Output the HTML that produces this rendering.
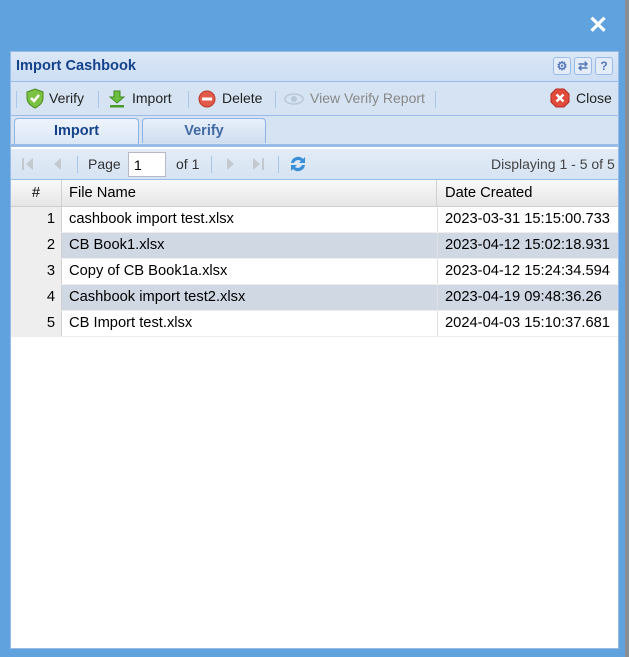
<!DOCTYPE html>
<html><head><style>
*{box-sizing:border-box;margin:0;padding:0}
body{width:629px;height:657px;background:#5fa2dd;position:relative;overflow:hidden;font-family:"Liberation Sans",Tahoma,sans-serif;font-size:14px;color:#000}
.abs{position:absolute}
#rs{left:625px;top:0;width:4px;height:657px;background:#8a8e92}
#x{left:588px;top:14px;color:#fff;font-size:24px;font-weight:bold;line-height:24px}
#panel{left:10px;top:51px;width:609px;height:598px;background:#fff;border:1px solid #99bbe8}
#title{left:11px;top:52px;width:607px;height:30px;background:linear-gradient(#dae7f6,#cddef3);border-bottom:1px solid #99bbe8}
#title span{position:absolute;left:5px;top:6px;font-weight:bold;color:#15428b;font-size:14.6px}
.tb{position:absolute;top:5px;width:18px;height:18px;border:1px solid #99bbe8;border-radius:3px;background:#e3ecf7;color:#5579b8;font-size:12px;font-weight:bold;text-align:center;line-height:16px}
#tool{left:11px;top:82px;width:607px;height:34px;background:#d6e3f2;border-bottom:1px solid #99bbe8}
.it{position:absolute;top:8px;font-size:14px;color:#222}
.sep{position:absolute;top:9px;width:1px;height:17px;background:#a9c5e8}
#tabs{left:11px;top:116px;width:607px;height:31px;background:#d6e3f2;border-bottom:3px solid #99bbe8}
.tab{position:absolute;top:2px;height:25px;border:1px solid #8db2e3;border-bottom:none;border-radius:4px 4px 0 0;background:linear-gradient(#e8f0fb,#d0def0);font-weight:bold;color:#416aa3;text-align:center;line-height:25px;font-size:14.5px}
#pg{left:11px;top:149px;width:607px;height:31px;background:linear-gradient(#e3ecf7,#d6e3f2);border-bottom:1px solid #99bbe8}
#hdr{left:11px;top:180px;width:607px;height:27px;background:linear-gradient(#f9f9f9,#e6e6e6);border-bottom:1px solid #d0d0d0}
.row{position:absolute;left:11px;width:607px;height:26px;border-bottom:1px solid #ededed}
.c{position:absolute;top:0;height:100%;line-height:25px;font-size:14.7px;white-space:nowrap}
</style></head><body>
<div class="abs" id="rs"></div>
<div class="abs" id="x">✕</div>
<div class="abs" id="panel"></div>
<div class="abs" id="title"><span>Import Cashbook</span>
<div class="tb" style="left:542px">⚙</div><div class="tb" style="left:563px">⇄</div><div class="tb" style="left:584px">?</div></div>
<div class="abs" id="tool">
<div class="sep" style="left:5px"></div>
<svg class="abs" style="left:14px;top:6px" width="20" height="21" viewBox="0 0 20 21"><path d="M10 1 L18 4 V10 C18 15 14 18 10 20 C6 18 2 15 2 10 V4 Z" fill="#7cc242" stroke="#4a8a20"/><path d="M6 10 L9 13 L14 7" stroke="#fff" stroke-width="2.5" fill="none"/></svg>
<div class="it" style="left:38px">Verify</div>
<div class="sep" style="left:87px"></div>
<svg class="abs" style="left:98px;top:8px" width="16" height="18" viewBox="0 0 16 18"><path d="M5 1 H11 V7 H15 L8 13 L1 7 H5 Z" fill="#6cbf3c" stroke="#3f8a1e"/><rect x="1" y="15" width="14" height="2.5" fill="#4a9a2a"/></svg>
<div class="it" style="left:121px">Import</div>
<div class="sep" style="left:177px"></div>
<svg class="abs" style="left:187px;top:8px" width="18" height="18"><circle cx="9" cy="9" r="8" fill="#e15a4a" stroke="#b83a2c"/><rect x="4" y="7.5" width="10" height="3" fill="#fff"/></svg>
<div class="it" style="left:211px">Delete</div>
<div class="sep" style="left:264px"></div>
<svg class="abs" style="left:273px;top:11px" width="20" height="12"><ellipse cx="10" cy="6" rx="9" ry="5" fill="none" stroke="#b8c8d8" stroke-width="1.5"/><circle cx="10" cy="6" r="3" fill="#b8c8d8"/></svg>
<div class="it" style="left:299px;color:#888">View Verify Report</div>
<div class="sep" style="left:424px"></div>
<svg class="abs" style="left:539px;top:6px" width="20" height="20"><polygon points="6,1 14,1 19,6 19,14 14,19 6,19 1,14 1,6" fill="#e24a3b" stroke="#b33024"/><path d="M6.5 6.5 L13.5 13.5 M13.5 6.5 L6.5 13.5" stroke="#fff" stroke-width="2.5"/></svg>
<div class="it" style="left:565px">Close</div>
</div>
<div class="abs" id="tabs">
<div class="tab" style="left:3px;width:125px;height:26px;color:#15428b;background:linear-gradient(#eef4fc,#dbe7f6)">Import</div>
<div class="tab" style="left:131px;width:124px">Verify</div>
</div>
<div class="abs" id="pg">
<svg class="abs" style="left:10px;top:8px" width="14" height="14"><rect x="1" y="1" width="2" height="12" fill="#c4c9cf"/><path d="M12 1 L5 7 L12 13Z" fill="#c4c9cf"/></svg>
<svg class="abs" style="left:40px;top:8px" width="12" height="14"><path d="M10 1 L3 7 L10 13Z" fill="#c4c9cf"/></svg>
<div class="sep" style="left:66px;top:7px"></div>
<div class="it" style="left:77px;top:7px;color:#333">Page</div>
<div class="abs" style="left:117px;top:3px;width:38px;height:25px;background:#fff;border:1px solid #b5b8c8;padding:4px 0 0 5px">1</div>
<div class="it" style="left:165px;top:7px;color:#333">of 1</div>
<div class="sep" style="left:200px;top:7px"></div>
<svg class="abs" style="left:214px;top:8px" width="12" height="14"><path d="M2 1 L9 7 L2 13Z" fill="#c4c9cf"/></svg>
<svg class="abs" style="left:240px;top:8px" width="14" height="14"><path d="M2 1 L9 7 L2 13Z" fill="#c4c9cf"/><rect x="11" y="1" width="2" height="12" fill="#c4c9cf"/></svg>
<div class="sep" style="left:267px;top:7px"></div>
<svg class="abs" style="left:277px;top:5px" width="20" height="20" viewBox="0 0 20 20"><path d="M3 9 A7 7 0 0 1 15 5 L17 3 V9 H11 L13 7 A4.5 4.5 0 0 0 6 9Z" fill="#3a8fd8"/><path d="M17 11 A7 7 0 0 1 5 15 L3 17 V11 H9 L7 13 A4.5 4.5 0 0 0 14 11Z" fill="#3a8fd8"/></svg>
<div class="it" style="left:480px;top:7px;color:#444">Displaying 1 - 5 of 5</div>
</div>
<div class="abs" id="hdr">
<div class="c" style="left:0;width:51px;text-align:center;border-right:1px solid #d0d0d0;line-height:26px">#</div>
<div class="c" style="left:51px;width:375px;padding-left:7px;border-right:1px solid #d0d0d0;line-height:26px">File Name</div>
<div class="c" style="left:426px;padding-left:8px;line-height:26px">Date Created</div>
</div>
<div class="row" style="top:207px;background:#fff"><div class="c" style="left:0;width:51px;background:#eee;text-align:right;padding-right:6px;border-right:1px solid #d0d0d0">1</div><div class="c" style="left:51px;padding-left:7px">cashbook import test.xlsx</div><div class="c" style="left:426px;padding-left:7px;border-left:1px solid #e0e0e0">2023-03-31 15:15:00.733</div></div>
<div class="row" style="top:233px;background:#d0d8e4"><div class="c" style="left:0;width:51px;background:#eee;text-align:right;padding-right:6px;border-right:1px solid #d0d0d0">2</div><div class="c" style="left:51px;padding-left:7px">CB Book1.xlsx</div><div class="c" style="left:426px;padding-left:7px;border-left:1px solid #e0e0e0">2023-04-12 15:02:18.931</div></div>
<div class="row" style="top:259px;background:#fff"><div class="c" style="left:0;width:51px;background:#eee;text-align:right;padding-right:6px;border-right:1px solid #d0d0d0">3</div><div class="c" style="left:51px;padding-left:7px">Copy of CB Book1a.xlsx</div><div class="c" style="left:426px;padding-left:7px;border-left:1px solid #e0e0e0">2023-04-12 15:24:34.594</div></div>
<div class="row" style="top:285px;background:#d0d8e4"><div class="c" style="left:0;width:51px;background:#eee;text-align:right;padding-right:6px;border-right:1px solid #d0d0d0">4</div><div class="c" style="left:51px;padding-left:7px">Cashbook import test2.xlsx</div><div class="c" style="left:426px;padding-left:7px;border-left:1px solid #e0e0e0">2023-04-19 09:48:36.26</div></div>
<div class="row" style="top:311px;background:#fff"><div class="c" style="left:0;width:51px;background:#eee;text-align:right;padding-right:6px;border-right:1px solid #d0d0d0">5</div><div class="c" style="left:51px;padding-left:7px">CB Import test.xlsx</div><div class="c" style="left:426px;padding-left:7px;border-left:1px solid #e0e0e0">2024-04-03 15:10:37.681</div></div>
</body></html>
